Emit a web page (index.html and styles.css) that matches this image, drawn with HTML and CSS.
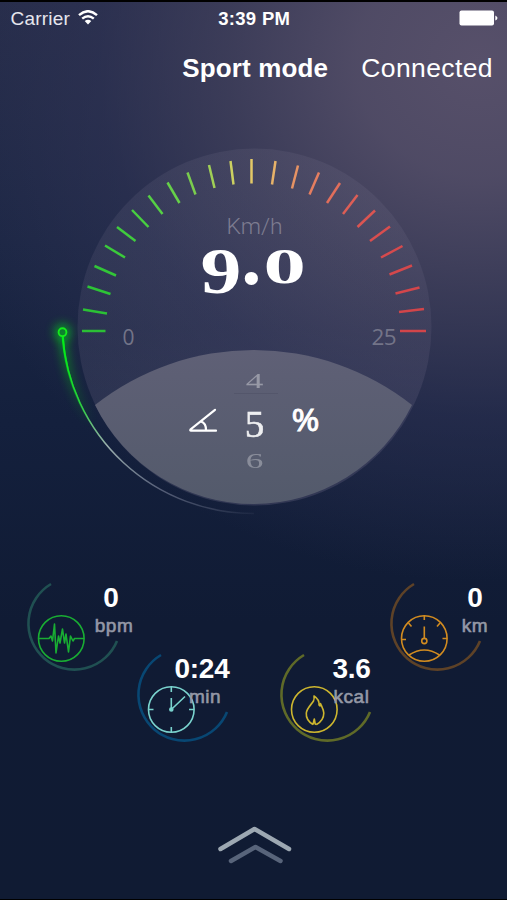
FILE: index.html
```html
<!DOCTYPE html>
<html lang="en">
<head>
<meta charset="utf-8">
<title>Sport mode</title>
<link rel="stylesheet" href="styles.css">
</head>
<body>
<main class="screen">
  <header class="status">
    <div class="status-left"><span class="carrier">Carrier</span>
      <svg class="wifi" width="20" height="15" viewBox="0 0 20 15"><g fill="none" stroke="#fff" stroke-width="2.400"><path d="M1 5.200Q10-2.800 19 5.200"/><path d="M4.200 8.700Q10 3.600 15.800 8.700"/></g><path d="M6.700 11Q10 8.300 13.300 11L10 14.400Z" fill="#fff"/></svg>
    </div>
    <span class="time">3:39 PM</span>
    <svg class="battery" width="39" height="16" viewBox="0 0 39 16"><rect x=".5" y=".5" width="34.500" height="15" rx="2" fill="#fff"/><path d="M36.300 5.500Q38.500 6.500 38.500 8T36.300 10.500Z" fill="#fff"/></svg>
  </header>
  <nav class="nav">
    <h1 class="title">Sport mode</h1>
    <span class="connection">Connected</span>
  </nav>

  <svg class="dial" width="507" height="400" viewBox="0 130 507 400">
    <defs>
      <linearGradient id="face" x1="0" y1="0" x2="0" y2="1"><stop offset="0" stop-color="#8c88a0" stop-opacity=".13"/><stop offset=".5" stop-color="#706b88" stop-opacity=".18"/><stop offset="1" stop-color="#706b88" stop-opacity=".3"/></linearGradient>
      <linearGradient id="lens" x1="0" y1="0" x2="0" y2="1"><stop offset="0" stop-color="#5f6076"/><stop offset="1" stop-color="#535a6b"/></linearGradient>
      <linearGradient id="trail" gradientUnits="userSpaceOnUse" x1="62" y1="332" x2="254" y2="513"><stop offset="0" stop-color="#18e81f"/><stop offset=".24" stop-color="#37c84b"/><stop offset=".42" stop-color="#9bafae"/><stop offset=".68" stop-color="#858ca3" stop-opacity=".6"/><stop offset="1" stop-color="#858ca3" stop-opacity=".08"/></linearGradient>
      <linearGradient id="halo" gradientUnits="userSpaceOnUse" x1="0" y1="332" x2="0" y2="425"><stop offset="0" stop-color="#00ef16"/><stop offset="1" stop-color="#00ef16" stop-opacity="0"/></linearGradient>
      <filter id="glow" filterUnits="userSpaceOnUse" x="30" y="300" width="100" height="160"><feGaussianBlur stdDeviation="5"/></filter>
    </defs>
    <ellipse cx="254.500" cy="327" rx="177" ry="178.500" fill="url(#face)"/>
    <path d="M95 405A256 256 0 0 1 412 405A177 178.500 0 0 1 95 405Z" fill="url(#lens)"/>
    <g class="ticks">
      <path stroke="#2bbf35" d="M82 331H105.500"/>
      <path stroke="#2bc135" d="M83 309.500L107 313.500"/>
      <path stroke="#2dc436" d="M87.500 286.500L110.500 294"/>
      <path stroke="#32c638" d="M94.500 266L116 275.500"/>
      <path stroke="#3bcb3b" d="M105 245.500L125 257.500"/>
      <path stroke="#40cc3d" d="M117 227L135.500 241"/>
      <path stroke="#48cf40" d="M132 210L148.500 227"/>
      <path stroke="#55d044" d="M148.500 195.500L162.500 214"/>
      <path stroke="#66d049" d="M167.500 182.500L179.500 203"/>
      <path stroke="#7acd4e" d="M187.500 172.500L195.500 194.500"/>
      <path stroke="#a0d056" d="M209 165L214.500 188"/>
      <path stroke="#cbd061" d="M230.500 161L233.500 184.500"/>
      <path stroke="#e3c967" d="M251.500 159V183.500"/>
      <path stroke="#e7b269" d="M275.500 161L272 184.500"/>
      <path stroke="#e69364" d="M298 165.500L292 188.500"/>
      <path stroke="#e57e60" d="M319 172.500L309.500 194.500"/>
      <path stroke="#e16e5b" d="M340 183L327 203"/>
      <path stroke="#dd5e56" d="M357.500 195L343 214"/>
      <path stroke="#db5552" d="M375 210.500L357.500 227"/>
      <path stroke="#d94e4f" d="M390 226.500L370 241"/>
      <path stroke="#d64a4d" d="M402.500 246L381 257.500"/>
      <path stroke="#d4484c" d="M412 265.500L389.500 274.500"/>
      <path stroke="#d3464b" d="M419.500 287.500L395.500 293.500"/>
      <path stroke="#d2454a" d="M424 309L399 312"/>
      <path stroke="#d2454a" d="M426 331H400"/>
    </g>
    <g fill="none">
      <path d="M62.500 335A191 191 0 0 0 100 436" stroke="url(#halo)" stroke-width="6" opacity=".65" filter="url(#glow)"/>
      <circle cx="62.500" cy="332" r="5" stroke="#00e814" stroke-width="7" opacity=".55" filter="url(#glow)"/>
      <path d="M62.700 336A191 191 0 0 0 254 513.500" stroke="url(#trail)" stroke-width="1.500"/>
      <path d="M62.700 336A191 191 0 0 0 91 424" stroke="url(#halo)" stroke-width="2.200"/>
      <circle cx="62.500" cy="332.200" r="3.900" stroke="#15ea1d" stroke-width="1.900"/>
    </g>
    <g class="scale">
      <text x="226.500" y="234" font-size="21.500" textLength="56" lengthAdjust="spacingAndGlyphs">Km/h</text>
      <text x="122.500" y="344.500" font-size="22.500" textLength="12" lengthAdjust="spacingAndGlyphs" class="limit">0</text>
      <text x="371.500" y="344.500" font-size="22.500" textLength="25" class="limit">25</text>
    </g>
    <g class="speed">
      <text transform="translate(200.500 293.300) scale(1.240 1)" font-size="66">9</text>
      <text transform="translate(241.200 284) scale(1.650)" font-size="49">.</text>
      <text transform="translate(263.500 283) scale(1.660 1)" font-size="51">0</text>
    </g>
    <g class="picker">
      <text transform="translate(254.500 387.500) scale(1.600 1)" font-size="22" opacity=".36">4</text>
      <path d="M234 393.500H278" stroke="#4d5064" stroke-width="1" opacity=".5"/>
      <text transform="translate(254.500 436.800) scale(1.060 1)" font-size="37" opacity=".9" stroke="#fff" stroke-width=".5">5</text>
      <text transform="translate(254.500 468) scale(1.600 1)" font-size="22" opacity=".3">6</text>
    </g>
    <path d="M215 409.800L190.500 429.500Q189.800 430.700 191 430.700H216M201 421.500Q206 423 206 430" fill="none" stroke="#fff" stroke-width="2.200" stroke-linecap="round"/>
    <text class="percent" x="291.500" y="430.500" font-size="31" textLength="28" lengthAdjust="spacingAndGlyphs">%</text>
  </svg>

  <section class="metrics">
    <article class="metric metric-bpm">
      <svg width="110" height="100" viewBox="20 578 110 100" fill="none"><path d="M51 584A46 46 0 1 0 117 641" stroke="#205052" stroke-width="2.600"/><g stroke="#19ad33" stroke-width="1.600"><circle cx="61.300" cy="638.500" r="22.800"/><path stroke-linejoin="round" d="M38.500 638.500H49L51 636L52.500 641L54.500 624L56 653L58.500 636L60 643L62.500 629L64.500 643L66 634L68.500 652L70.500 636L73 641L74.500 638.500H84"/></g></svg>
      <div class="reading"><strong>0</strong><span>bpm</span></div>
    </article>
    <article class="metric metric-min">
      <svg width="110" height="100" viewBox="20 578 110 100" fill="none"><path d="M51 584A46 46 0 1 0 117 641" stroke="#084773" stroke-width="2.600"/><g stroke="#7ad3ce" stroke-width="1.600"><circle cx="61.300" cy="638.500" r="22.800"/><path d="M61.300 616V621M61.300 656V661M38.500 638.500H43.500M79 638.500H84M61.300 638.500V627M61.300 638.500L75 625.500"/><circle cx="61.300" cy="638.500" r="1.500" fill="#7ad3ce"/></g></svg>
      <div class="reading"><strong>0:24</strong><span>min</span></div>
    </article>
    <article class="metric metric-kcal">
      <svg width="110" height="100" viewBox="20 578 110 100" fill="none"><path d="M51 584A46 46 0 1 0 117 641" stroke="#5f6a28" stroke-width="2.600"/><g stroke="#cdb62f" stroke-width="1.600"><circle cx="61.300" cy="638.500" r="22.800"/><path stroke-linejoin="round" d="M60 653.500C55 650.500 53 646 53.300 642C54 637 58 634 60.500 630Q61.500 627.500 61 625C64 627 66.500 630 66 634L67 635L67.500 632.500C69 636 70.800 639 70.800 642C70.800 647 68 651 63.500 653.500M60 653.500L61.300 648L62.200 653L63.500 653.500"/></g></svg>
      <div class="reading"><strong>3.6</strong><span>kcal</span></div>
    </article>
    <article class="metric metric-km">
      <svg width="110" height="100" viewBox="20 578 110 100" fill="none"><path d="M51 584A46 46 0 1 0 117 641" stroke="#5e4227" stroke-width="2.600"/><g stroke="#d18b20" stroke-width="1.600"><circle cx="61.300" cy="638.500" r="22.800"/><path d="M61.300 616V620M45.500 623L48.500 626.500M77 623L74 626.500M38.500 639.500H43M79.500 638.500H84M61.300 626.500V638M46 655Q61.300 645 76.500 655"/><circle cx="61.300" cy="641" r="2.600"/></g></svg>
      <div class="reading"><strong>0</strong><span>km</span></div>
    </article>
  </section>

  <svg class="chevrons" width="76" height="42" viewBox="0 0 76 42" fill="none" stroke-width="4.500" stroke-linecap="round" stroke-linejoin="round"><path d="M4.500 25L38.500 5L73 25" stroke="#9da8b2"/><path d="M15 37L39.500 23L64.500 37" stroke="#58647a"/></svg>
</main>
</body>
</html>
```
FILE: styles.css
```css
* { box-sizing: border-box; }
body { margin: 0; background: #101b33; }
.screen {
  width: 507px;
  height: 900px;
  overflow: hidden;
  display: flex;
  flex-direction: column;
  border-top: 2px solid #000;
  border-bottom: 1px solid #000;
  color: #fff;
  font-family: "Liberation Sans", Arial, sans-serif;
  background:
    radial-gradient(ellipse 560px 520px at 480px 60px, #57506a 0%, rgba(84, 78, 104, .9) 22%, rgba(68, 66, 94, .75) 45%, rgba(52, 54, 88, .48) 68%, rgba(30, 40, 72, 0) 100%),
    linear-gradient(#252c49 0, #1b2644 240px, #14203d 420px, #101b34 620px, #101b33 100%);
}
.status {
  height: 34px;
  padding: 0 9px 0 10.500px;
  display: grid;
  grid-template-columns: 1fr auto 1fr;
  align-items: center;
  font-size: 19px;
}
.status-left { display: flex; align-items: center; gap: 8px; color: #e6e6ee; }
.carrier { letter-spacing: .2px; }
.wifi { margin-top: -3px; }
.time { font-weight: 700; font-size: 18.500px; letter-spacing: .3px; }
.battery { justify-self: end; margin-top: -2px; }
.nav {
  height: 66px;
  padding: 0 14px 0 0;
  display: flex;
  justify-content: flex-end;
  align-items: center;
  gap: 33px;
  line-height: 30px;
}
.title { margin: 0; font-size: 26px; font-weight: 700; letter-spacing: .15px; }
.connection { font-size: 26.500px; letter-spacing: .4px; }
.nav > * { margin-top: -2px; }
.dial { display: block; flex: none; margin-top: 28px; }
.ticks { stroke-width: 2.500px; stroke-linecap: butt; }
.scale { font-family: Roboto, sans-serif; font-weight: 300; fill: #7d7c90; }
.limit { font-family: "Open Sans", sans-serif; fill: #737488; font-weight: 400; }
.speed { font-family: "Liberation Serif", serif; font-weight: 700; fill: #fff; }
.picker { font-family: "Liberation Serif", serif; fill: #fff; text-anchor: middle; }
.percent { font-family: "Noto Sans", sans-serif; font-weight: 400; fill: #fff; stroke: #fff; stroke-width: .8px; }
.metrics {
  margin: 48px 0 0 20px;
  height: 172px;
  display: grid;
  grid-template-columns: 110px 142.500px 110.500px 110px;
  align-items: start;
}
.metric { display: grid; width: 124px; }
.metric > * { grid-area: 1 / 1; }
.metric-min, .metric-kcal { margin-top: 71px; }
.reading {
  width: 80px;
  margin: 4px 0 0 51px;
  display: flex;
  flex-direction: column;
  align-items: center;
}
.reading strong { font-size: 28px; line-height: 32px; font-weight: 700; letter-spacing: -.3px; }
.reading span {
  font-size: 19px;
  line-height: 24px;
  letter-spacing: .5px;
  color: #9498a6;
  -webkit-text-stroke: .6px #9498a6;
}
.metric-bpm span { margin-left: 6px; }
.metric-min .reading { margin-left: 32px; }
.metric-min span { margin-left: 6px; }
.metric-kcal .reading { margin-left: 39px; }
.metric-km .reading { margin-left: 52px; }
.chevrons { display: block; margin: 74px 0 0 215.500px; }
```
